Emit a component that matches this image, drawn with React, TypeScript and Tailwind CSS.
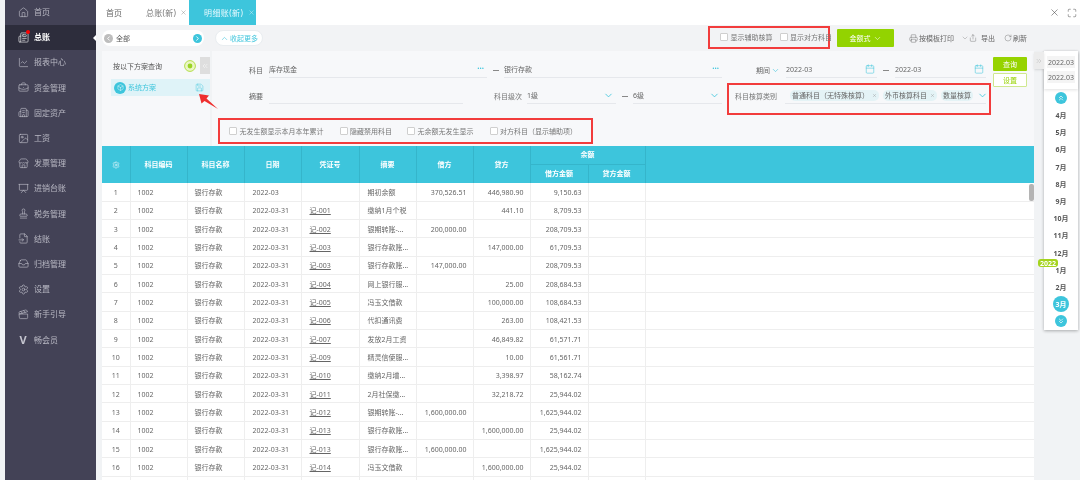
import React from "react";
import {
  House, Newspaper, ChartLine, BriefcaseBusiness, Building2, Image, Store, Presentation, Stamp,
  FileInput, Inbox, Settings, Clapperboard, X, Maximize, ChevronUp, ChevronDown, ChevronLeft, ChevronRight,
  ChevronsLeft, ChevronsRight, ChevronsUp, ChevronsDown, Printer, Share, RotateCw, Calendar, Box, Save,
} from "lucide-react";

const nav: [any, string][] = [
  [House, "首页"], [Newspaper, "总账"], [ChartLine, "报表中心"], [BriefcaseBusiness, "资金管理"],
  [Building2, "固定资产"], [Image, "工资"], [Store, "发票管理"], [Presentation, "进销台账"],
  [Stamp, "税务管理"], [FileInput, "结账"], [Inbox, "归档管理"], [Settings, "设置"],
  [Clapperboard, "新手引导"], [null, "畅会员"],
];

const rows: [string, string, string, string, string, string][] = [
  ["2022-03", "", "期初余额", "370,526.51", "446,980.90", "9,150.63"],
  ["2022-03-31", "记-001", "缴纳1月个税", "", "441.10", "8,709.53"],
  ["2022-03-31", "记-002", "银期转账-...", "200,000.00", "", "208,709.53"],
  ["2022-03-31", "记-003", "银行存款账...", "", "147,000.00", "61,709.53"],
  ["2022-03-31", "记-003", "银行存款账...", "147,000.00", "", "208,709.53"],
  ["2022-03-31", "记-004", "网上银行服...", "", "25.00", "208,684.53"],
  ["2022-03-31", "记-005", "冯玉文借款", "", "100,000.00", "108,684.53"],
  ["2022-03-31", "记-006", "代扣通讯费", "", "263.00", "108,421.53"],
  ["2022-03-31", "记-007", "发放2月工资", "", "46,849.82", "61,571.71"],
  ["2022-03-31", "记-009", "精灵信使服...", "", "10.00", "61,561.71"],
  ["2022-03-31", "记-010", "缴纳2月增...", "", "3,398.97", "58,162.74"],
  ["2022-03-31", "记-011", "2月社保缴...", "", "32,218.72", "25,944.02"],
  ["2022-03-31", "记-012", "银期转账-...", "1,600,000.00", "", "1,625,944.02"],
  ["2022-03-31", "记-013", "银行存款账...", "", "1,600,000.00", "25,944.02"],
  ["2022-03-31", "记-013", "银行存款账...", "1,600,000.00", "", "1,625,944.02"],
  ["2022-03-31", "记-014", "冯玉文借款", "", "1,600,000.00", "25,944.02"],
];

const months = ["4月", "5月", "6月", "7月", "8月", "9月", "10月", "11月", "12月", "1月", "2月"];

function Check({ label, className = "" }: { label: string; className?: string }) {
  return (
    <span className={`flex items-center gap-[2.5px] whitespace-nowrap text-[7px] text-[#777] ${className}`}>
      <span className="w-[8px] h-[8px] rounded-[1px] border border-[#cfcfcf] bg-white" />
      {label}
    </span>
  );
}

function Field({ w, text, right }: { w: string; text?: string; right?: React.ReactNode }) {
  return (
    <div className={`${w} h-[16px] flex items-center justify-between border-b border-[#e6e8ec] text-[7px] text-[#666] pb-[1px]`}>
      <span>{text}</span>
      {right}
    </div>
  );
}

const Dots = () => <span className="text-[#3dc5dc] text-[8px] leading-none font-bold mr-[3px] -mt-[3px]">···</span>;
const Dash = ({ w }: { w: string }) => <div className={`${w} flex justify-center`}><span className="w-[6px] h-px bg-[#888]" /></div>;
const Cal = () => <Calendar size={10} strokeWidth={1.3} className="text-[#3dc5dc] mr-[2px]" />;
const Chev = () => <ChevronDown size={11} strokeWidth={1.8} className="text-[#3dc5dc] mr-[2px]" />;

function Tag({ label, x = true }: { label: string; x?: boolean }) {
  return (
    <span className="h-[11px] flex items-center gap-[2px] rounded-[5px] bg-[#e4f3f6] px-[2px] text-[7px] text-[#666] whitespace-nowrap">
      {label}
      {x && <X size={5} strokeWidth={1.5} className="text-[#888] ml-[1px]" />}
    </span>
  );
}

export default function App() {
  return (
    <div className="w-[1080px] h-[480px] overflow-hidden flex bg-[#f1f3f5] blur-[0.3px] font-['Noto_Sans','Noto_Sans_CJK_SC',sans-serif] leading-none">
      {/* sidebar */}
      <aside className="ml-[5px] w-[91px] h-full shrink-0 bg-[#434256] flex flex-col">
        {nav.map(([Icon, label], i) => (
          <div key={label} className={`relative h-[25.2px] shrink-0 flex items-center pb-[1px] pl-[12px] gap-[5px] text-[8px] ${i === 1 ? "bg-[#2d2d3c] text-white font-bold" : "text-[#b9b9c4]"}`}>
            <span className="w-[12px] flex justify-center relative">
              {Icon ? <Icon size={11} strokeWidth={1.3} className={i === 1 ? "text-white" : "text-[#c5c5cf]"} /> : <span className="text-[11px] font-bold text-[#c5c5cf]">V</span>}
              {i === 1 && <span className="absolute -top-[2px] right-[-1px] w-[4px] h-[4px] rounded-full bg-[#f00]" />}
            </span>
            {label}
            {i === 1 && <span className="absolute right-0 top-[10px] border-y-[3px] border-y-transparent border-r-[3px] border-r-white" />}
          </div>
        ))}
      </aside>

      <div className="flex-1 flex flex-col min-w-0">
        {/* tabs */}
        <div className="h-[25px] shrink-0 bg-white flex items-center text-[8px] text-[#666]">
          <span className="w-[26px] ml-[10px]">首页</span>
          <span className="ml-[14px] w-[43px] flex items-center gap-[4px] tracking-[0.3px] text-[#777]">总账(新)<X size={7} strokeWidth={1.3} /></span>
          <span className="w-[67px] h-full bg-[#3dc5dc] text-[#eafaff] tracking-[0.4px] flex items-center pl-[15px] gap-[5px]">明细账(新)<X size={7} strokeWidth={1.3} /></span>
          <div className="ml-auto flex items-center h-full text-[#444]">
            <span className="w-[17px] flex justify-center"><X size={11} strokeWidth={1.2} /></span>
            <span className="w-[17px] flex justify-center"><Maximize size={10} strokeWidth={1.2} /></span>
          </div>
        </div>

        {/* toolbar */}
        <div className="h-[26px] shrink-0 flex items-center pl-[6px] bg-[#f2f3f5]">
          <div className="w-[102px] h-[16px] rounded-full bg-white flex items-center justify-between px-[2px] text-[7px] text-[#555]">
            <span className="flex items-center gap-[3px]">
              <span className="w-[9px] h-[9px] rounded-full bg-[#bdbdbd] flex items-center justify-center"><ChevronLeft size={7} strokeWidth={3} className="text-white" /></span>
              全部
            </span>
            <span className="w-[9px] h-[9px] rounded-full bg-[#3dc5dc] flex items-center justify-center"><ChevronRight size={7} strokeWidth={3} className="text-white" /></span>
          </div>
          <div className="ml-[11px] w-[48px] h-[16px] rounded-full bg-white border border-[#e9edf0] flex items-center justify-center gap-[1px] text-[7px] text-[#3dc5dc]">
            <ChevronUp size={9} strokeWidth={1.5} />收起更多
          </div>
          <div className="ml-[445px] w-[122px] h-[23px] -mt-[2px] border-2 border-[#f23c3c] flex items-center pl-[10px]">
            <Check label="显示辅助核算" />
            <Check label="显示对方科目" className="ml-[7px]" />
          </div>
          <div className="ml-[7px] w-[57px] h-[18px] rounded-[1px] bg-[#93d300] text-white text-[7px] flex items-center justify-center gap-[2px]">
            金额式<ChevronDown size={9} strokeWidth={1.5} />
          </div>
          <div className="ml-[15px] flex items-center text-[7px] text-[#666]">
            <Printer size={9} strokeWidth={1.2} />
            <span className="ml-[1px]">按模板打印</span>
            <ChevronDown size={8} strokeWidth={1} className="ml-[7px]" />
            <Share size={8} strokeWidth={1.2} />
            <span className="ml-[4px]">导出</span>
            <RotateCw size={8} strokeWidth={1.2} className="ml-[9px]" />
            <span className="ml-[1px]">刷新</span>
          </div>
        </div>

        <div className="flex-1 flex min-h-0">
          <div className="w-[938px] shrink-0 pl-[6px] flex flex-col relative">
            {/* query panels */}
            <div className="h-[95px] shrink-0 flex">
              <div className="relative w-[108px] mr-[2px] bg-[#f7f8fa] pt-[8px]">
                <div className="flex items-center justify-between h-[14px] pl-[11px] pr-[14px] text-[7px] text-[#555]">
                  按以下方案查询
                  <svg width="12" height="12" viewBox="0 0 12 12">
                    <circle cx="6" cy="6" r="5.4" fill="#eaf6c4" stroke="#b4de4a" strokeWidth="1" />
                    <circle cx="6" cy="6" r="2.4" fill="#9ad324" />
                  </svg>
                </div>
                <span className="absolute right-0 top-[6px] w-[10px] h-[17px] bg-[#dedede] flex items-center justify-center"><ChevronsLeft size={8} className="text-white" strokeWidth={1.5} /></span>
                <div className="ml-[9px] mt-[6px] h-[17px] bg-[#dff3f8] flex items-center pl-[3px] text-[7px] text-[#3dc5dc]">
                  <span className="w-[12px] h-[12px] rounded-full bg-[#3dc5dc] flex items-center justify-center mr-[2px]"><Box size={7} strokeWidth={1.5} className="text-white" /></span>
                  系统方案
                  <Save size={9} strokeWidth={1.2} className="ml-auto mr-[6px]" />
                </div>
                <svg className="absolute left-[96px] top-[42px]" width="24" height="22" viewBox="0 0 24 22">
                  <path d="M1 1 L11 2.5 L8.5 5.5 L20 16 L6.5 8 L3.5 10.5 Z" fill="#ee2f2f" />
                </svg>
              </div>

              <div className="flex-1 bg-[#f7f8fa] flex pt-[6px]">
                <div className="w-[781px] pt-[5px] flex flex-col">
                  <div className="flex h-[16px] items-center">
                    <span className="w-[51px] text-right text-[7px] text-[#666] mr-[6px]">科目</span>
                    <Field w="w-[218px]" text="库存现金" right={<Dots />} />
                    <Dash w="w-[17px]" />
                    <Field w="w-[218px]" text="银行存款" right={<Dots />} />
                    <div className="w-[64px] flex items-center pl-[34px] text-[7px] text-[#666]">期间<ChevronDown size={9} strokeWidth={1.6} className="text-[#3dc5dc] ml-[1px]" /></div>
                    <Field w="w-[91px]" text="2022-03" right={<Cal />} />
                    <Dash w="w-[18px]" />
                    <Field w="w-[91px]" text="2022-03" right={<Cal />} />
                  </div>
                  <div className="flex h-[16px] items-start mt-[10px]">
                    <span className="w-[51px] h-[16px] flex items-center justify-end text-[7px] text-[#666] mr-[6px]">摘要</span>
                    <Field w="w-[194px]" />
                    <span className="w-[59px] h-[16px] flex items-center justify-end text-[7px] text-[#777] mr-[5px]">科目级次</span>
                    <Field w="w-[89px]" text="1级" right={<Chev />} />
                    <div className="h-[16px] flex items-center"><Dash w="w-[17px]" /></div>
                    <Field w="w-[89px]" text="6级" right={<Chev />} />
                    <div className="ml-[5px] -mt-[5px] w-[264px] h-[32px] shrink-0 border-2 border-[#f23c3c] flex items-start pt-[3px] pl-[6px] text-[7px] text-[#777]">
                      <span className="h-[16px] w-[50px] flex items-center">科目核算类别</span>
                      <div className="w-[201px] h-[16px] flex items-center gap-[4px] pl-[5px] border-b border-[#e6e8ec] pb-[1px]">
                        <Tag label="普通科目（无特殊核算）" />
                        <Tag label="外币核算科目" />
                        <Tag label="数量核算" x={false} />
                        <ChevronDown size={11} strokeWidth={1.8} className="text-[#3dc5dc] shrink-0 ml-auto mr-[2px]" />
                      </div>
                    </div>
                  </div>
                  <div className="ml-[6px] mt-[14px] w-[375px] h-[26px] border-2 border-[#f23c3c] flex items-center pl-[9px]">
                    <Check label="无发生额显示本月本年累计" />
                    <Check label="隐藏禁用科目" className="ml-[16px]" />
                    <Check label="无余额无发生显示" className="ml-[15px]" />
                    <Check label="对方科目（显示辅助项）" className="ml-[16px]" />
                  </div>
                </div>
                <div className="w-[34px] flex flex-col gap-[2px] text-[7px]">
                  <span className="h-[14px] rounded-[1px] bg-[#96d300] text-white flex items-center justify-center">查询</span>
                  <span className="h-[14px] rounded-[1px] border border-[#cfe88f] bg-white text-[#96d300] flex items-center justify-center">设置</span>
                </div>
              </div>
            </div>

            {/* table */}
            <div className="relative flex-1 min-h-0 overflow-hidden">
              <table className="table-fixed border-collapse w-[932px] text-[7px] text-[#666]">
                <colgroup>
                  {[28, 57, 57, 57, 58, 57, 57, 57, 58, 57, 389].map((w, i) => (
                    <col key={i} style={{ width: w }} />
                  ))}
                </colgroup>
                <thead className="bg-[#3dc5dc] text-white font-bold">
                  <tr className="h-[18px]">
                    <th rowSpan={2} className="border-r border-[#35b5cb]"><Settings size={8} strokeWidth={1.5} className="mx-auto" /></th>
                    {["科目编码", "科目名称", "日期", "凭证号", "摘要", "借方", "贷方"].map((h) => (
                      <th key={h} rowSpan={2} className="border-r border-[#35b5cb]">{h}</th>
                    ))}
                    <th colSpan={2} className="border-r border-b border-[#35b5cb]">余额</th>
                    <th rowSpan={2} />
                  </tr>
                  <tr className="h-[19px]">
                    <th className="border-r border-[#35b5cb]">借方金额</th>
                    <th className="border-r border-[#35b5cb]">贷方金额</th>
                  </tr>
                </thead>
                <tbody className="bg-white">
                  {rows.map((r, i) => (
                    <tr key={i} className="h-[18.33px] border-b border-[#eeeeee]">
                      <td className="pt-px text-center border-r border-[#eeeeee]">{i + 1}</td>
                      <td className="pt-px pl-[7px] border-r border-[#eeeeee]">1002</td>
                      <td className="pt-px pl-[7px] border-r border-[#eeeeee]">银行存款</td>
                      <td className="pt-px pl-[8px] border-r border-[#eeeeee]">{r[0]}</td>
                      <td className="pt-px pl-[8px] border-r border-[#eeeeee] underline">{r[1]}</td>
                      <td className="pt-px pl-[8px] border-r border-[#eeeeee] whitespace-nowrap overflow-hidden">{r[2]}</td>
                      <td className="pt-px pr-[6px] text-right border-r border-[#eeeeee]">{r[3]}</td>
                      <td className="pt-px pr-[6px] text-right border-r border-[#eeeeee]">{r[4]}</td>
                      <td className="pt-px pr-[6px] text-right border-r border-[#eeeeee]">{r[5]}</td>
                      <td className="border-r border-[#eeeeee]" />
                      <td />
                    </tr>
                  ))}
                  <tr className="h-[18.33px]">
                    {Array.from({ length: 10 }).map((_, i) => <td key={i} className="border-r border-[#eeeeee]" />)}
                    <td />
                  </tr>
                </tbody>
              </table>
              <span className="absolute left-[927px] top-[38px] w-[5px] h-[17px] rounded-[2px] bg-[#b4b4b4]" />
            </div>
          </div>

          {/* right period rail */}
          <div className="relative flex-1 pl-[10px]">
            <span className="absolute left-0 top-[1px] w-[10px] h-[17px] bg-[#ececec] shadow flex items-center justify-center"><ChevronsRight size={8} strokeWidth={1.2} className="text-[#aaa]" /></span>
            <div className="w-[34px] h-[279px] bg-white shadow-[0_1px_3px_rgba(0,0,0,0.3)] flex flex-col items-center text-[7px] font-bold text-[#555]">
              <div className="w-full h-[38px] pt-[5px] flex flex-col items-center gap-[3px] font-normal text-[#666] shadow-[0_1px_3px_rgba(0,0,0,0.12)]">
                <span className="w-[28px] h-[12px] bg-[#f4f4f4] flex items-center justify-center">2022.03</span>
                <span className="w-[28px] h-[12px] bg-[#f4f4f4] flex items-center justify-center">2022.03</span>
              </div>
              <span className="mt-[3px] w-[12px] h-[12px] rounded-full bg-[#3dc5dc] flex items-center justify-center"><ChevronsUp size={8} strokeWidth={2} className="text-white" /></span>
              <div className="mt-[3px] flex flex-col items-center">
                {months.map((m) => <span key={m} className="h-[17.2px] flex items-center">{m}</span>)}
              </div>
              <span className="w-[16px] h-[16px] rounded-full bg-[#3dc5dc] text-white flex items-center justify-center">3月</span>
              <span className="mt-[3px] w-[12px] h-[12px] rounded-full bg-[#3dc5dc] flex items-center justify-center"><ChevronsDown size={8} strokeWidth={2} className="text-white" /></span>
            </div>
            <span className="absolute left-[4px] top-[208px] w-[20px] h-[8px] rounded-[3px] bg-[#a4d41e] text-white text-[7px] font-bold flex items-center justify-center">2022</span>
          </div>
        </div>
      </div>
    </div>
  );
}
